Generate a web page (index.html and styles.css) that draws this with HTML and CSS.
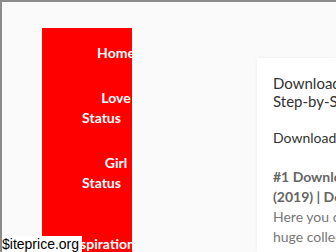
FILE: index.html
```html
<!DOCTYPE html>
<html lang="en">
<head>
    <meta charset="UTF-8">
    <meta name="viewport" content="width=device-width, initial-scale=1.0">
    <title>Status Downloader</title>
    <link rel="stylesheet" href="styles.css">
</head>
<body>
    <div class="page">
        <nav class="sidebar">
            <div class="nav-list">
                <a class="nav-link" href="#">Home</a>
                <a class="nav-link" href="#"><span>Love</span><span class="shift">Status</span></a>
                <a class="nav-link" href="#"><span>Girl</span><span class="shift">Status</span></a>
                <a class="nav-link nav-last" href="#"><span class="shift">Inspiration</span></a>
            </div>
        </nav>

        <main class="card">
            <h1 class="card-title">Download WhatsApp Status Video<br>Step-by-Step Guide</h1>
            <p class="card-link">Download</p>
            <h2 class="card-heading">#1 Download WhatsApp Status Video<br>(2019) | Download Status Online</h2>
            <p class="card-text">Here you can find and download a<br>huge collection of status videos</p>
        </main>
    </div>

    <div class="watermark">$iteprice.org</div>
</body>
</html>
```

FILE: styles.css
```css
html, body {
    height: 100%;
}

body {
    margin: 0;
    background: #fafafa;
    border-top: 2px solid #8c8c8c;
    border-left: 2px solid #8c8c8c;
    box-sizing: border-box;
    overflow: hidden;
    font-family: Lato, 'Liberation Sans', sans-serif;
    position: relative;
}

.page {
    display: flex;
    align-items: stretch;
    gap: 125px;
    padding: 26px 0 0 40px;
    height: 100%;
    box-sizing: border-box;
    overflow: hidden;
}

.sidebar {
    flex: 0 0 90px;
    background: #ff0000;
    overflow: hidden;
}

.nav-list {
    width: 148px;
    padding-top: 15px;
    text-align: center;
}

.nav-link {
    display: block;
    margin-bottom: 25px;
    color: #fff;
    font-size: 14px;
    font-weight: 700;
    line-height: 20px;
    text-decoration: none;
    white-space: nowrap;
}

.nav-link span {
    display: block;
}

.nav-link .shift {
    margin-right: 29px;
}

.nav-link:nth-child(3) {
    margin-bottom: 41px;
}

.card {
    flex: 1;
    min-width: 0;
    margin-top: 30px;
    padding: 16px 0 0 16px;
    background: #fff;
    box-shadow: 0 0 4px rgba(0,0,0,0.06);
    overflow: hidden;
    white-space: nowrap;
}

.card-title {
    margin: 0;
    font-size: 15px;
    font-weight: 400;
    line-height: 18px;
    color: #333;
}

.card-link {
    margin: 18px 0 0;
    font-size: 14px;
    line-height: 20px;
    color: #333;
}

.card-heading {
    margin: 19px 0 0;
    font-size: 14px;
    font-weight: 700;
    line-height: 20px;
    color: #666;
}

.card-text {
    margin: 0;
    font-size: 14px;
    line-height: 20px;
    color: #777;
}

.watermark {
    position: absolute;
    left: -2px;
    bottom: 0;
    padding: 0 3px 0 2px;
    background: #fff;
    color: #000;
    font-family: 'Liberation Sans', sans-serif;
    font-size: 14px;
    line-height: 16px;
}
```
